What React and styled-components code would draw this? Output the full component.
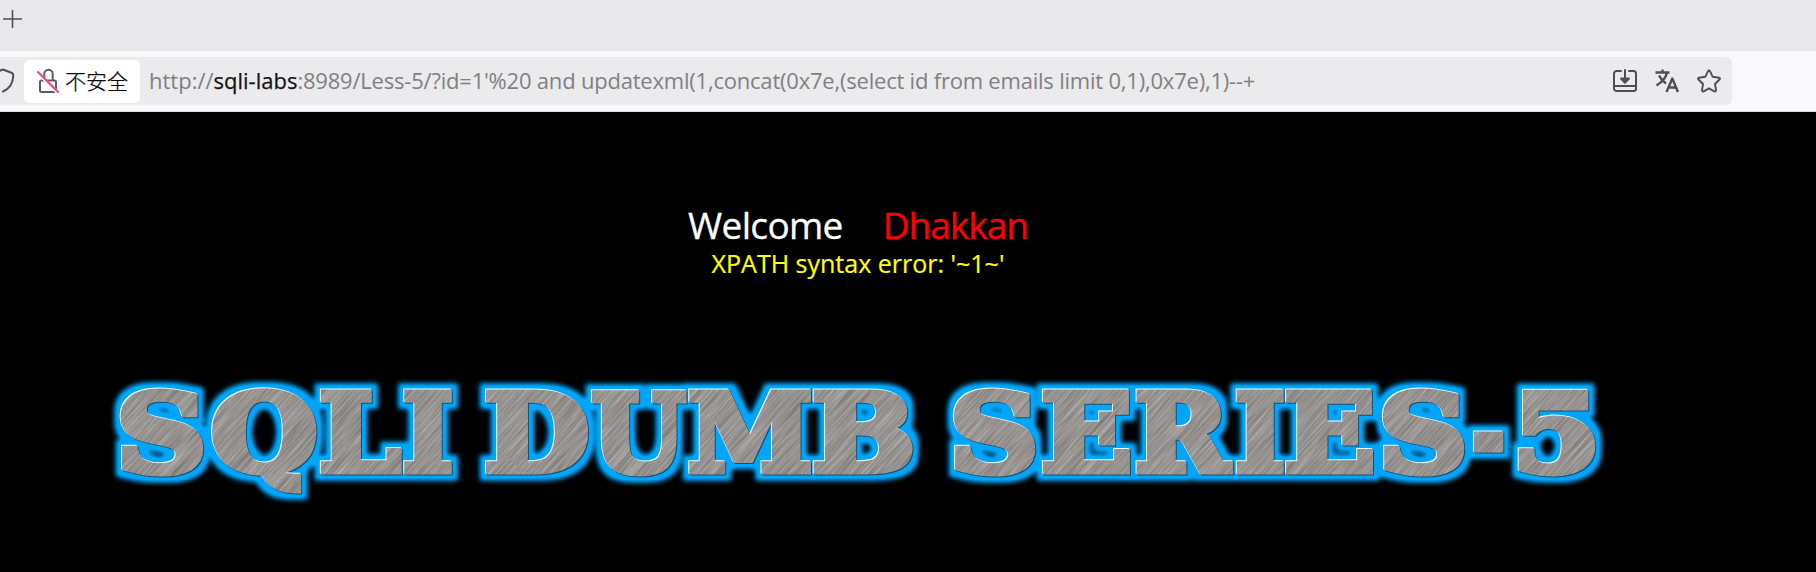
import React from "react";
import styled, { createGlobalStyle } from "styled-components";

const Global = createGlobalStyle`
  * { box-sizing: border-box; }
  body { margin: 0; background: #000; overflow: hidden; }
`;
const Window = styled.div`
  display: flex; flex-direction: column; width: 1816px; height: 572px;
  background: #000; font-family: "Open Sans", "Noto Sans CJK SC", sans-serif;
`;
const TabStrip = styled.div`
  display: flex; align-items: flex-start; height: 51px; flex: none;
  background: #e9e9eb; padding: 10px 0 0 3px;
`;
const Toolbar = styled.div`
  height: 61px; flex: none; background: #f9f9fb; border-bottom: 1px solid #dcdcde; padding-top: 6px;
`;
const AddressBar = styled.div`
  display: flex; align-items: center; width: 1732px; height: 48px;
  background: #ebebed; border-radius: 0 6px 6px 0; padding-right: 11px;
`;
const ShieldSlot = styled.div`
  width: 24px; display: flex; flex: none;
`;
const Security = styled.div`
  display: flex; align-items: center; width: 116px; height: 43px; flex: none;
  background: #fff; border-radius: 5px; padding-left: 12px; gap: 5px;
`;
const SecurityLabel = styled.span`
  font: 300 21px/30px "Noto Sans CJK SC", sans-serif; color: #08070c; white-space: nowrap;
  padding-bottom: 2px; -webkit-text-stroke: 0.25px;
`;
const Url = styled.div`
  flex: 1; padding: 0 0 2px 9px; font-size: 22px; line-height: 32px;
  color: #808083; white-space: pre;
`;
const Host = styled.span`color: #15141a; -webkit-text-stroke: 0.25px;`;
const Path = styled.span`letter-spacing: -0.21px;`;
const Actions = styled.div`
  display: flex; align-items: center; gap: 18px;
`;
const Page = styled.main`
  display: flex; flex-direction: column; flex: 1; width: 1716px; padding-top: 88px; color: #fff;
`;
const Heading = styled.div`
  display: flex; justify-content: center; gap: 40px; font-size: 37px; line-height: 50px;
  -webkit-text-stroke: 0.3px;
`;
const Greeting = styled.span`letter-spacing: -0.65px;`;
const Name = styled.span`color: #f00; letter-spacing: -1px;`;
const ErrorText = styled.div`
  text-align: center; font-size: 25px; line-height: 26px; color: #ff0; -webkit-text-stroke: 0.2px;
`;
const Banner = styled.svg`
  display: block; width: 1716px; height: 160px; margin-top: 84px;
`;
const BannerWord = styled.text`
  font: bold 106px "DejaVu Serif", serif; fill: url(#metal); stroke: url(#metal);
  stroke-width: 7px; stroke-linejoin: miter; stroke-miterlimit: 3;
`;
const Icon = styled.svg`
  display: block; flex: none; fill: none; stroke: ${p => p.$tone || "#4f4e58"};
  stroke-width: ${p => p.$weight || 2}; stroke-linecap: ${p => p.$cap || "round"}; stroke-linejoin: round;
`;

// advance, ink left and ink right of each letter, in em
const metrics = {
  S: [0.722, 0.063, 0.672], Q: [0.871, 0.04, 0.828], L: [0.703, 0.04, 0.685], I: [0.468, 0.04, 0.425],
  D: [0.867, 0.04, 0.825], U: [0.872, 0.025, 0.855], M: [1.107, 0.035, 1.066], B: [0.845, 0.04, 0.79],
  E: [0.762, 0.04, 0.715], R: [0.831, 0.04, 0.842], "-": [0.415, 0.047, 0.37], 5: [0.696, 0.078, 0.63],
};
// left and right edge of each letter in the banner
const words = [
  [["S", 121, 204], ["Q", 212.5, 316], ["L", 320.5, 402], ["I", 403.5, 452]],
  [["D", 485.5, 587.5], ["U", 591, 687], ["M", 688.7, 811.5], ["B", 813.3, 912]],
  [["S", 954, 1036], ["E", 1042.5, 1130], ["R", 1136, 1233.5], ["I", 1236, 1284], ["E", 1285.7, 1373],
    ["S", 1383, 1465], ["-", 1472.5, 1505], ["5", 1519, 1596]],
];
const EDGE = 3.5;
const place = ([ch, left, right]) => {
  const [adv, l, r] = metrics[ch];
  const f = (right - left - 2 * EDGE) / (r - l);
  return { ch, x: left + EDGE - l * f, length: adv * f };
};

const Plus = () => (
  <Icon width="19" height="19" viewBox="0 0 19 19" $weight={1.6}>
    <path d="M9.500 .500v17M.500 9h18" />
  </Icon>
);
const Shield = () => (
  <Icon width="16" height="26" viewBox="0 0 16 26">
    <path d="M-8 5.500L3 1.500L12 5Q13.500 5.600 13.300 7.500C13 15 10 20.500 3 23.500" />
  </Icon>
);
const Lock = () => (
  <Icon width="24" height="26" viewBox="0 0 24 26" $tone="#5b5b66">
    <path d="M8.300 12V6a4.200 4.200 0 0 1 8.400 0v6M5.500 12.500h13a1.500 1.500 0 0 1 1.500 1.500v8.500a1.500 1.500 0 0 1-1.500 1.500H5.500A1.500 1.500 0 0 1 4 22.500V14A1.500 1.500 0 0 1 5.500 12.500z" />
    <path d="M3 6L20 23" stroke="#fff" strokeWidth="3.500" />
    <path d="M2 4L22 24" stroke="#ff3b6b" />
  </Icon>
);
const Install = () => (
  <Icon width="24" height="24" viewBox="0 0 24 24">
    <path d="M8 2H3.500A2.500 2.500 0 0 0 1 4.500v15A2.500 2.500 0 0 0 3.500 22h17a2.500 2.500 0 0 0 2.500-2.500v-15A2.500 2.500 0 0 0 20.500 2H16M1 17h22M12 1v9" />
    <path d="M8 9.500h8L12 13.700z" fill="#4f4e58" />
  </Icon>
);
const Translate = () => (
  <Icon width="24" height="24" viewBox="0 0 24 24" $cap="butt" $weight={2.4}>
    <path d="M.500 3.500h14M7.500 .500v3M12 3.500C11 8.500 7 13 1.500 16.500M4 6.500C5.500 9.500 8 12.500 11 14.500" />
    <path d="M11.500 23L17.300 9.500L23 23M13.500 18.500h7.500" />
  </Icon>
);
const Star = () => (
  <Icon width="24" height="24" viewBox="0 0 24 24" $weight={1.9}>
    <path d="M11 2.200Q12 .500 13 2.200L15.700 7.800L22 8.700Q23.700 9.200 22.500 10.500L18 15L19 21Q19 23 17.300 22.300L12 19.300L6.700 22.300Q5 23 5 21L6 15L1.500 10.500Q.300 9.200 2 8.700L8.300 7.800Z" />
  </Icon>
);

const BannerDefs = () => (
  <defs>
    <filter id="streaks" x="0" y="0" width="100%" height="100%" colorInterpolationFilters="sRGB">
      <feTurbulence type="fractalNoise" baseFrequency="0.02 0.6" numOctaves="3" seed="8" />
      <feColorMatrix values="0.32 0 0 0 0.43  0.32 0 0 0 0.415  0.32 0 0 0 0.405  0 0 0 0 1" />
    </filter>
    <pattern id="metal" width="1800" height="1800" patternUnits="userSpaceOnUse" patternTransform="rotate(-48)">
      <rect width="1800" height="1800" filter="url(#streaks)" />
    </pattern>
    <filter id="bevel" filterUnits="userSpaceOnUse" x="80" y="360" width="1560" height="160" colorInterpolationFilters="sRGB">
      <feMorphology in="SourceAlpha" operator="dilate" radius="6" result="wide" />
      <feGaussianBlur in="wide" stdDeviation="2.5" result="soft" />
      <feComponentTransfer in="soft" result="halo"><feFuncA type="linear" slope="1.15" /></feComponentTransfer>
      <feFlood floodColor="#00a6fb" />
      <feComposite in2="halo" operator="in" result="glow" />
      <feOffset in="SourceAlpha" dx="-1.1" dy="-1.1" result="up" />
      <feFlood floodColor="#f4fbff" />
      <feComposite in2="up" operator="in" result="light" />
      <feOffset in="SourceAlpha" dx="0.8" dy="0.8" result="down" />
      <feFlood floodColor="#17506e" />
      <feComposite in2="down" operator="in" result="dark" />
      <feMerge>
        <feMergeNode in="glow" /><feMergeNode in="dark" /><feMergeNode in="light" /><feMergeNode in="SourceGraphic" />
      </feMerge>
    </filter>
  </defs>
);

export default function App() {
  return (
    <Window>
      <Global />
      <TabStrip><Plus /></TabStrip>
      <Toolbar>
        <AddressBar>
          <ShieldSlot><Shield /></ShieldSlot>
          <Security><Lock /><SecurityLabel>不安全</SecurityLabel></Security>
          <Url>http://<Host>sqli-labs</Host><Path>:8989/Less-5/?id=1'%20 and updatexml(1,concat(0x7e,(select id from emails limit 0,1),0x7e),1)--+</Path></Url>
          <Actions><Install /><Translate /><Star /></Actions>
        </AddressBar>
      </Toolbar>
      <Page>
        <Heading><Greeting>Welcome</Greeting><Name>Dhakkan</Name></Heading>
        <ErrorText>XPATH syntax error: '~1~'</ErrorText>
        <Banner viewBox="0 360 1716 160">
          <BannerDefs />
          <g filter="url(#bevel)">
            {words.map((word, i) => (
              <BannerWord key={i} y="471">
                {word.map(place).map((g, j) => (
                  <tspan key={j} x={g.x} textLength={g.length} lengthAdjust="spacingAndGlyphs">{g.ch}</tspan>
                ))}
              </BannerWord>
            ))}
          </g>
        </Banner>
      </Page>
    </Window>
  );
}
